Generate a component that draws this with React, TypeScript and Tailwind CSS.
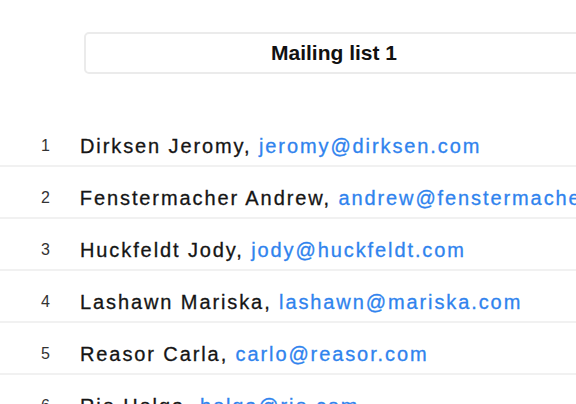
const contacts = [
  { name: "Dirksen Jeromy", email: "jeromy@dirksen.com" },
  { name: "Fenstermacher Andrew", email: "andrew@fenstermacher.com" },
  { name: "Huckfeldt Jody", email: "jody@huckfeldt.com" },
  { name: "Lashawn Mariska", email: "lashawn@mariska.com" },
  { name: "Reasor Carla", email: "carlo@reasor.com" },
  { name: "Rio Helga", email: "helga@rio.com" },
];

const ContactRow = ({ index, name, email }: { index: number; name: string; email: string }) => (
  <div className="flex h-[52px] items-center whitespace-nowrap border-b-2 border-[#f1f1f1] pt-[12px]">
    <span className="w-[51px] text-right text-[16px] tracking-[1px] text-[#333]">{index}</span>
    <span className="ml-[29px] text-[20px] tracking-[1.9px] text-[#151515] [-webkit-text-stroke:0.3px_currentColor]">
      {name},{" "}
      <a href="#" className="text-[#2f83ee]">
        {email}
      </a>
    </span>
  </div>
);

export default function App() {
  return (
    <div className="h-[404px] w-[576px] overflow-hidden bg-white font-['Liberation_Sans',Arial,sans-serif]">
      <div className="pl-[84px] pt-[32px]">
        <div className="flex h-[42px] w-[500px] items-center justify-center rounded-[5px] border-2 border-[#ebebeb] text-[21px] font-bold text-[#111]">
          Mailing list 1
        </div>
      </div>
      <div className="mt-[41px] w-[640px]">
        {contacts.map((c, i) => (
          <ContactRow key={c.email} index={i + 1} name={c.name} email={c.email} />
        ))}
      </div>
    </div>
  );
}
